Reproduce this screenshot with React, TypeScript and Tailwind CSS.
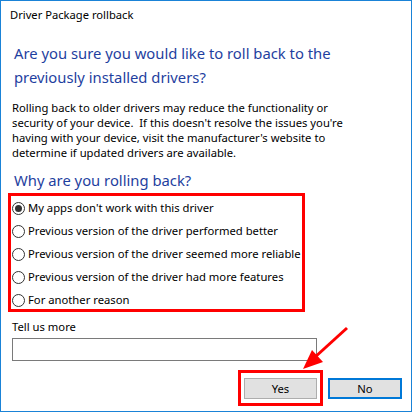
import React from "react";

const options = [
  "My apps don't work with this driver",
  "Previous version of the driver performed better",
  "Previous version of the driver seemed more reliable",
  "Previous version of the driver had more features",
  "For another reason",
];

function Radio({ checked }: { checked: boolean }) {
  return (
    <span className="flex items-center justify-center w-[13px] h-[13px] rounded-full border border-[#333333] bg-white shrink-0">
      {checked && <span className="w-[7px] h-[7px] rounded-full bg-[#333333]" />}
    </span>
  );
}

export default function App() {
  return (
    <div
      className="relative w-[412px] h-[412px] bg-white border border-[#1a83d7] text-black overflow-hidden"
      style={{ fontFamily: '"Noto Sans", "Open Sans", sans-serif' }}
    >
      <div className="pt-[6px] pl-[9px] text-[11.2px] leading-[16px]">Driver Package rollback</div>

      <div className="mt-[18px] pl-[13px] text-[14.8px] leading-[24px] text-[#1f3fa0] whitespace-nowrap">
        Are you sure you would like to roll back to the
        <br />
        previously installed drivers?
      </div>

      <div className="mt-[11px] pl-[11px] text-[11.25px] leading-[15px] whitespace-nowrap">
        Rolling back to older drivers may reduce the functionality or
        <br />
        security of your device.&nbsp; If this doesn't resolve the issues you're
        <br />
        having with your device, visit the manufacturer's website to
        <br />
        determine if updated drivers are available.
      </div>

      <div className="mt-[8px] pl-[13px] text-[14.8px] leading-[24px] text-[#1f3fa0]">Why are you rolling back?</div>

      <div className="mt-[1px] ml-[7px] w-[297px] h-[119px] border-[3px] border-[#ff0000] pt-[1px]">
        {options.map((o, i) => (
          <div key={o} className="flex items-center h-[23px] pl-[1px] gap-[3px] text-[11.25px] whitespace-nowrap">
            <Radio checked={i === 0} />
            <span>{o}</span>
          </div>
        ))}
      </div>

      <div className="mt-[7px] pl-[11px] text-[11.25px] leading-[16px]">Tell us more</div>
      <div className="mt-[3px] ml-[11px] w-[305px] h-[23px] border border-[#7a7a7a] bg-white" />

      <div className="mt-[9px] flex justify-end items-start gap-[5px] pr-[9px]">
        <div className="w-[85px] h-[36px] border-[3px] border-[#ff0000] flex items-start justify-center pt-[5px]">
          <button className="w-[73px] h-[21px] bg-[#e1e1e1] border border-[#adadad] text-[11.25px] leading-[19px]">Yes</button>
        </div>
        <button className="mt-[8px] w-[74px] h-[21px] bg-[#e1e1e1] border-2 border-[#0078d7] text-[11.25px] leading-[17px]">No</button>
      </div>

      <svg className="absolute left-0 top-0" width="412" height="412" viewBox="0 0 412 412">
        <line x1="346" y1="327" x2="313" y2="357" stroke="#ff0000" strokeWidth="3" />
        <polygon points="302,368 311,349 322,361" fill="#ff0000" />
      </svg>
    </div>
  );
}
